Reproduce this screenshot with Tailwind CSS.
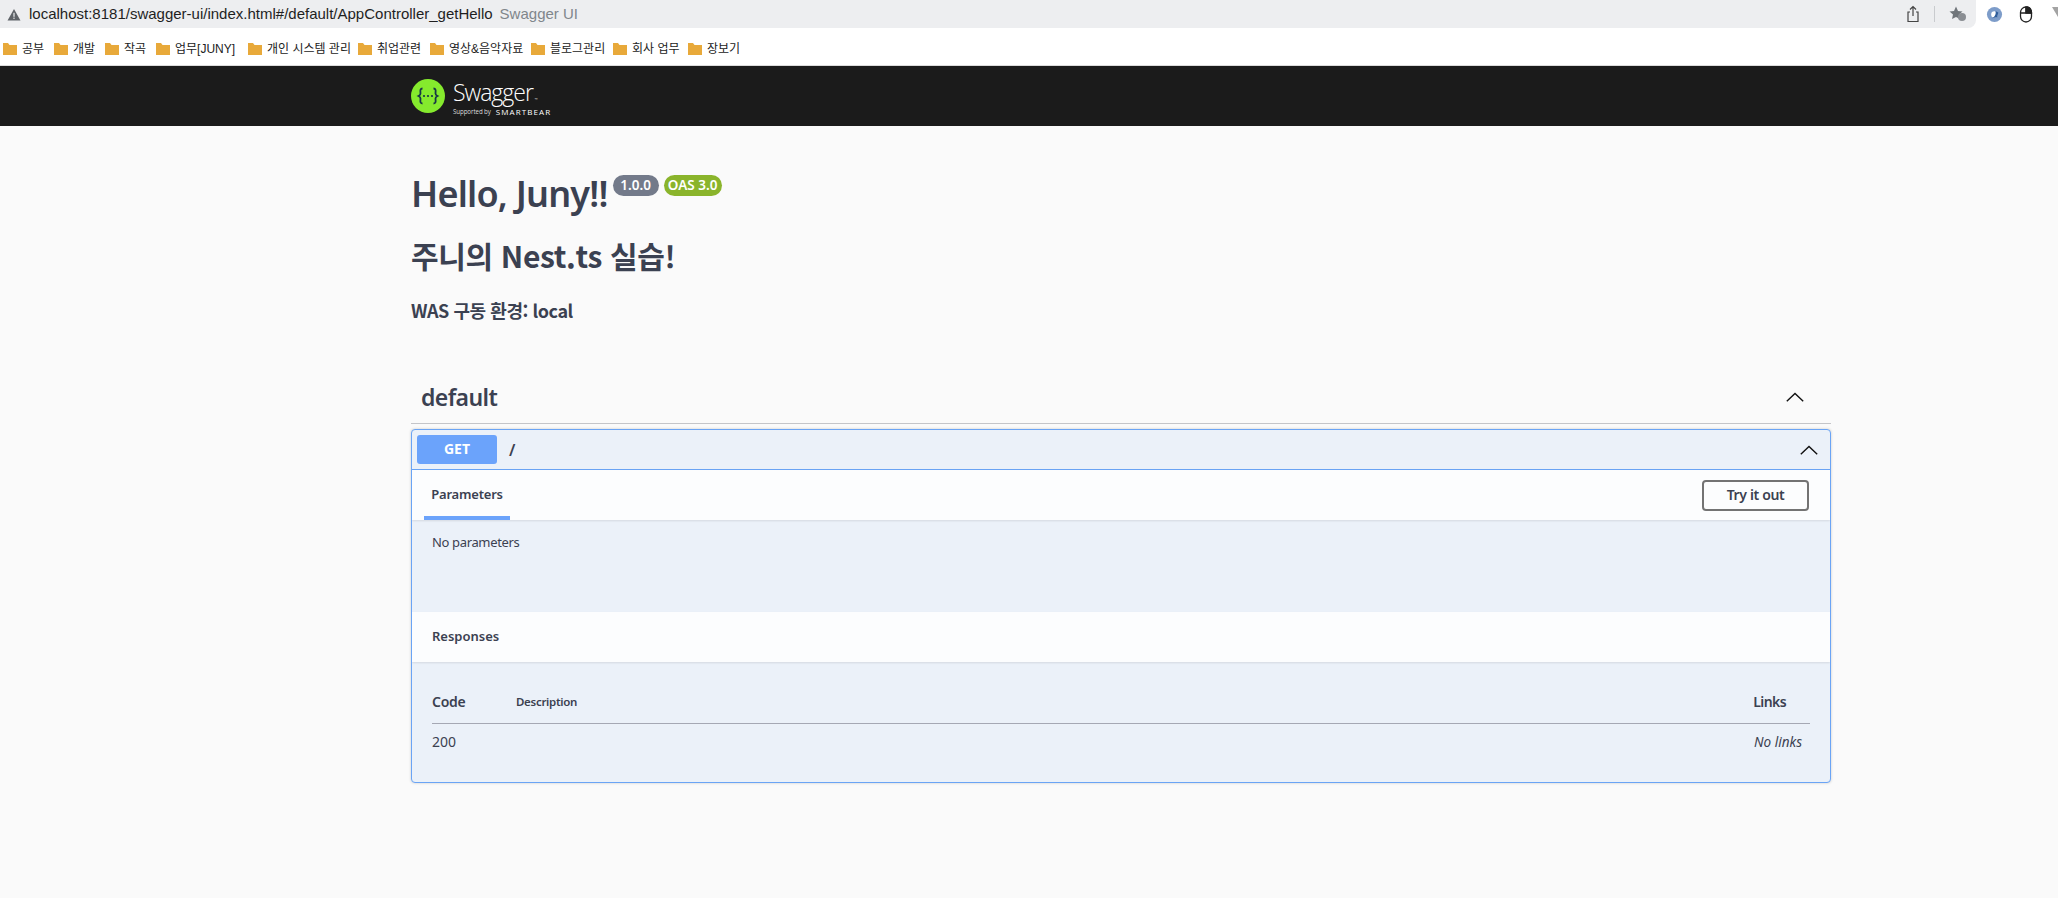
<!DOCTYPE html>
<html lang="ko">
<head>
<meta charset="UTF-8"/>
<title>Swagger UI</title>
<script src="https://cdn.jsdelivr.net/npm/@tailwindcss/browser@4"></script>
</head>
<body class="bg-[#fafafa] overflow-hidden h-[898px] font-['Noto_Sans','Noto_Sans_CJK_KR',sans-serif] text-[#3b4151]">

<!-- browser: address bar -->
<div class="h-[28px] bg-white flex">
  <div class="w-[1976px] shrink-0 h-[28px] bg-[#edeef0] rounded-br-[8px] flex items-center pl-[7px] font-['Liberation_Sans','Noto_Sans_CJK_KR',sans-serif] text-[15px]">
    <svg width="14" height="13" viewBox="0 0 14 13" class="mr-[8px]"><path d="M7 1 L13.5 12.5 H0.5 Z" fill="#5f6368"/><rect x="6.4" y="4.8" width="1.2" height="4" fill="#edeef0"/><rect x="6.4" y="9.6" width="1.2" height="1.3" fill="#edeef0"/></svg>
    <span class="text-[#1f1f1f]">localhost:8181/swagger-ui/index.html#/default/AppController_getHello</span>
    <span class="text-[#80868b] ml-[7px]">Swagger UI</span>
    <div class="ml-auto flex items-center">
      <svg width="14" height="18" viewBox="0 0 14 18" fill="none" stroke="#444" stroke-width="1.2"><path d="M4 7 H2 V16.5 H12 V7 H10"/><path d="M7 11 V1.5 M4 4.5 L7 1.5 L10 4.5"/></svg>
      <div class="w-px h-[16px] bg-[#c9cbce] ml-[14px] mr-[14px]"></div>
      <svg width="18" height="16" viewBox="0 0 18 16" class="mr-[9px]"><path d="M7 0.5 L9 5 L13.5 5.5 L10 8.5 L11 13 L7 11 L3 13 L4 8.5 L0.5 5.5 L5 5 Z" fill="#70757a"/><circle cx="13" cy="11" r="4" fill="#8a8e93"/></svg>
    </div>
  </div>
  <div class="flex-1 flex items-center pl-[10px] overflow-hidden">
    <svg width="17" height="17" viewBox="0 0 18 18" class="shrink-0"><circle cx="9" cy="9" r="8" fill="#7d9cc9"/><circle cx="9" cy="9" r="3.5" fill="#fff"/><path d="M6 13 C9 12 11 9 10 5 L13 7 L12 12 Z" fill="#2f5d9b"/></svg>
    <svg width="14" height="18" viewBox="0 0 14 18" class="ml-[16px] shrink-0" fill="none" stroke="#222" stroke-width="1.3"><rect x="1.5" y="2" width="11" height="15" rx="5.5"/><path d="M1.5 8 H12.5 M7 2 V8"/><path d="M7 2 H9 Q12.5 3 12.5 8 H7 Z" fill="#222"/></svg>
    <svg width="14" height="16" viewBox="0 0 14 16" class="ml-[19px] shrink-0"><path d="M0 1 L6 1 L11 10 L9 16 Z" fill="#a3a3a3"/></svg>
  </div>
</div>

<!-- browser: bookmarks -->
<div class="h-[38px] bg-white border-b border-[#dcdcdc] flex items-center pl-[3px] pt-[4px] text-[12px] text-[#222] font-['Liberation_Sans','Noto_Sans_CJK_KR',sans-serif]">
  <div class="flex items-center w-[51px]"><svg width="14" height="12" viewBox="0 0 14 12"><path d="M0 0 H5 L6.5 2 H14 V12 H0 Z" fill="#e8a93a"/></svg><span class="ml-[5px]">공부</span></div>
  <div class="flex items-center w-[51px]"><svg width="14" height="12" viewBox="0 0 14 12"><path d="M0 0 H5 L6.5 2 H14 V12 H0 Z" fill="#e8a93a"/></svg><span class="ml-[5px]">개발</span></div>
  <div class="flex items-center w-[51px]"><svg width="14" height="12" viewBox="0 0 14 12"><path d="M0 0 H5 L6.5 2 H14 V12 H0 Z" fill="#e8a93a"/></svg><span class="ml-[5px]">작곡</span></div>
  <div class="flex items-center w-[92px]"><svg width="14" height="12" viewBox="0 0 14 12"><path d="M0 0 H5 L6.5 2 H14 V12 H0 Z" fill="#e8a93a"/></svg><span class="ml-[5px]">업무[JUNY]</span></div>
  <div class="flex items-center w-[110px]"><svg width="14" height="12" viewBox="0 0 14 12"><path d="M0 0 H5 L6.5 2 H14 V12 H0 Z" fill="#e8a93a"/></svg><span class="ml-[5px]">개인 시스템 관리</span></div>
  <div class="flex items-center w-[72px]"><svg width="14" height="12" viewBox="0 0 14 12"><path d="M0 0 H5 L6.5 2 H14 V12 H0 Z" fill="#e8a93a"/></svg><span class="ml-[5px]">취업관련</span></div>
  <div class="flex items-center w-[101px]"><svg width="14" height="12" viewBox="0 0 14 12"><path d="M0 0 H5 L6.5 2 H14 V12 H0 Z" fill="#e8a93a"/></svg><span class="ml-[5px]">영상&amp;음악자료</span></div>
  <div class="flex items-center w-[82px]"><svg width="14" height="12" viewBox="0 0 14 12"><path d="M0 0 H5 L6.5 2 H14 V12 H0 Z" fill="#e8a93a"/></svg><span class="ml-[5px]">블로그관리</span></div>
  <div class="flex items-center w-[75px]"><svg width="14" height="12" viewBox="0 0 14 12"><path d="M0 0 H5 L6.5 2 H14 V12 H0 Z" fill="#e8a93a"/></svg><span class="ml-[5px]">회사 업무</span></div>
  <div class="flex items-center"><svg width="14" height="12" viewBox="0 0 14 12"><path d="M0 0 H5 L6.5 2 H14 V12 H0 Z" fill="#e8a93a"/></svg><span class="ml-[5px]">장보기</span></div>
</div>

<!-- swagger topbar -->
<div class="h-[60px] bg-[#1b1b1b] pl-[411px] flex items-center">
  <svg width="34" height="34" viewBox="0 0 34 34" class="shrink-0">
    <circle cx="17" cy="17" r="17" fill="#85ea2d"/>
    <path d="M11.5 9.5 C8.5 9.5 9.5 12.5 9.5 14.5 C9.5 16 8.5 16.5 7.5 17 C8.5 17.5 9.5 18 9.5 19.5 C9.5 21.5 8.5 24.5 11.5 24.5 M22.5 9.5 C25.5 9.5 24.5 12.5 24.5 14.5 C24.5 16 25.5 16.5 26.5 17 C25.5 17.5 24.5 18 24.5 19.5 C24.5 21.5 25.5 24.5 22.5 24.5" fill="none" stroke="#173647" stroke-width="1.8"/>
    <circle cx="13" cy="17" r="1.1" fill="#173647"/><circle cx="17" cy="17" r="1.1" fill="#173647"/><circle cx="21" cy="17" r="1.1" fill="#173647"/>
  </svg>
  <div class="ml-[8px] flex flex-col text-white font-['Open_Sans',sans-serif]">
    <span class="text-[23px] font-light leading-[28px] tracking-[-1px] mt-[3px]">Swagger<span class="text-[4px] ml-[2px]">™</span></span>
    <span class="flex items-center leading-[10px] mt-[-7px]"><span class="text-[6.2px] text-[#ddd] tracking-[-0.1px]">Supported by</span><span class="ml-[5px] text-[8px] font-medium tracking-[1.1px]">SMARTBEAR</span></span>
  </div>
</div>

<!-- info -->
<div class="ml-[411px] w-[1420px]">
  <div class="pt-[42px] flex items-start h-[104px]">
    <h1 class="text-[36px] leading-[52px] font-semibold tracking-[-0.8px]">Hello, Juny!!</h1>
    <span class="ml-[5px] mt-[7px] h-[21px] w-[46px] rounded-full bg-[#737a8a] text-white text-[13.5px] font-semibold leading-[20px] text-center">1.0.0</span>
    <span class="ml-[5px] mt-[7px] h-[21px] w-[58px] rounded-full bg-[#8ab42b] text-white text-[13.5px] font-semibold leading-[20px] text-center">OAS 3.0</span>
  </div>
  <h2 class="mt-[3px] text-[30px] leading-[44px] font-semibold tracking-[-0.35px] font-['Noto_Sans_CJK_KR',sans-serif]">주니의 Nest.ts 실습!</h2>
  <h3 class="mt-[20px] text-[18px] leading-[26px] font-semibold tracking-[-0.45px] font-['Noto_Sans_CJK_KR',sans-serif]">WAS 구동 환경: local</h3>

  <!-- tag -->
  <div class="mt-[49px] h-[52px] pl-[10px] pr-[27px] pb-[2px] flex items-center justify-between border-b border-[#c4c5c9]">
    <span class="text-[23px] font-semibold leading-[34px] tracking-[-0.6px]">default</span>
    <svg width="18" height="10" viewBox="0 0 18 10" fill="none" stroke="#111" stroke-width="1.4"><path d="M0.8 9.3 L9 1.5 L17.2 9.3"/></svg>
  </div>

  <!-- operation -->
  <div class="mt-[5px] h-[354px] border border-[#6aa4f5] rounded-[4px] bg-[#ebf1f9] shadow-[0_0_3px_rgba(0,0,0,0.19)] overflow-hidden">
    <div class="h-[40px] border-b border-[#6aa4f5] flex items-center pl-[5px] pr-[12px]">
      <span class="w-[80px] h-[29px] rounded-[3px] bg-[#6ba3fb] text-white text-[14px] font-bold leading-[28px] text-center">GET</span>
      <span class="ml-[12px] text-[16px] font-semibold">/</span>
      <svg width="18" height="10" viewBox="0 0 18 10" fill="none" stroke="#111" stroke-width="1.4" class="ml-auto"><path d="M0.8 9.3 L9 1.5 L17.2 9.3"/></svg>
    </div>
    <div class="h-[50px] bg-[#fcfdfe] pl-[12px] pr-[21px] flex items-stretch justify-between shadow-[0_1px_2px_rgba(0,0,0,0.1)] relative">
      <div class="w-[86px] border-b-[4px] border-[#6ba3fb] text-center text-[13px] font-semibold leading-[49px] tracking-[-0.2px]">Parameters</div>
      <button class="self-center w-[107px] h-[31px] border-2 border-[#737373] rounded-[4px] text-[14px] font-semibold leading-[26px] tracking-[-0.35px] bg-transparent">Try it out</button>
    </div>
    <div class="h-[92px] pl-[20px] pt-[12px] text-[13px] leading-[20px] tracking-[-0.35px]">No parameters</div>
    <div class="h-[50px] bg-[#fcfdfe] pl-[20px] flex items-center text-[13px] font-semibold shadow-[0_1px_2px_rgba(0,0,0,0.1)] relative">Responses</div>
    <div class="px-[20px] pt-[29px]">
      <div class="h-[33px] flex items-start border-b border-[#a5a8b4] text-[14px] font-semibold leading-[21px] tracking-[-0.3px]">
        <span class="w-[84px]">Code</span>
        <span class="text-[11.5px]">Description</span>
        <span class="ml-auto pr-[24px] tracking-[-0.6px]">Links</span>
      </div>
      <div class="flex justify-between pt-[8px] text-[14px] leading-[20px] pr-[8px]">
        <span>200</span>
        <span class="italic text-[13.5px]">No links</span>
      </div>
    </div>
  </div>
</div>
</body>
</html>
